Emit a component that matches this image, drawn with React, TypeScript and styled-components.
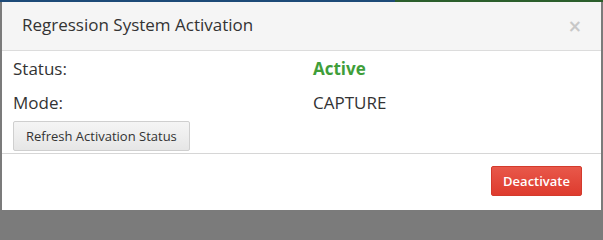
import React from 'react';
import styled, { createGlobalStyle } from 'styled-components';

const GlobalStyle = createGlobalStyle`
  html, body {
    margin: 0;
    padding: 0;
    height: 210px;
    overflow: hidden;
  }
  body {
    font-family: 'Open Sans', 'Liberation Sans', sans-serif;
    color: #333;
    background:
      linear-gradient(to right, #1d4a78 0 395px, #2b5e2c 395px) top / 100% 2px no-repeat,
      #7b7b7b;
  }
`;

const Backdrop = styled.div`
  height: 210px;
  padding: 2px 2px 0 2px;
  box-sizing: border-box;
  overflow: hidden;
`;

const Modal = styled.div`
  background: #fff;
  height: 100%;
  display: flex;
  flex-direction: column;
`;

const Header = styled.div`
  display: flex;
  align-items: center;
  justify-content: space-between;
  height: 48px;
  padding: 0 19px 0 20px;
  background: #f5f5f5;
  border-bottom: 1px solid #dcdcdc;
`;

const Title = styled.h4`
  margin: 0 0 4px;
  font-size: 17px;
  font-weight: 400;
  color: #333;
`;

const Close = styled.button`
  border: none;
  background: none;
  padding: 0;
  font-family: 'DejaVu Sans', sans-serif;
  font-size: 17px;
  font-weight: 700;
  color: #c8c8c8;
  line-height: 1;
  cursor: pointer;
  margin-top: 0;
`;

const Body = styled.div`
  padding: 0 11px 2px 11px;
  border-bottom: 1px solid #d6d6d6;
`;

const Row = styled.div`
  display: grid;
  grid-template-columns: 300px 1fr;
  align-items: center;
  height: 34px;
  font-size: 17px;
`;

const Value = styled.span<{ $tone?: 'success' }>`
  color: ${p => (p.$tone === 'success' ? '#3f9e3a' : '#333')};
  font-weight: ${p => (p.$tone === 'success' ? 700 : 400)};
`;

const Button = styled.button<{ $variant?: 'danger' }>`
  height: 30px;
  padding: 0 ${p => (p.$variant === 'danger' ? 11 : 12)}px;
  font-family: 'Open Sans', 'Liberation Sans', sans-serif;
  font-size: 13px;
  border-radius: 2px;
  cursor: pointer;
  color: ${p => (p.$variant === 'danger' ? '#fff' : '#333')};
  font-weight: ${p => (p.$variant === 'danger' ? 600 : 400)};
  border: 1px solid ${p => (p.$variant === 'danger' ? '#d33a2c' : '#cfcfcf')};
  background: ${p =>
    p.$variant === 'danger'
      ? 'linear-gradient(#e8584a, #de3b2e)'
      : 'linear-gradient(#f5f5f5, #e6e6e6)'};
`;

const Actions = styled.div`
  margin-top: 2px;
`;

const Footer = styled.div`
  display: flex;
  justify-content: flex-end;
  padding: 12px 19px;
`;

export default function App() {
  return (
    <>
      <GlobalStyle />
      <Backdrop>
        <Modal>
          <Header>
            <Title>Regression System Activation</Title>
            <Close aria-label="Close">×</Close>
          </Header>
          <Body>
            <Row>
              <span>Status:</span>
              <Value $tone="success">Active</Value>
            </Row>
            <Row>
              <span>Mode:</span>
              <Value>CAPTURE</Value>
            </Row>
            <Actions>
              <Button>Refresh Activation Status</Button>
            </Actions>
          </Body>
          <Footer>
            <Button $variant="danger">Deactivate</Button>
          </Footer>
        </Modal>
      </Backdrop>
    </>
  );
}
